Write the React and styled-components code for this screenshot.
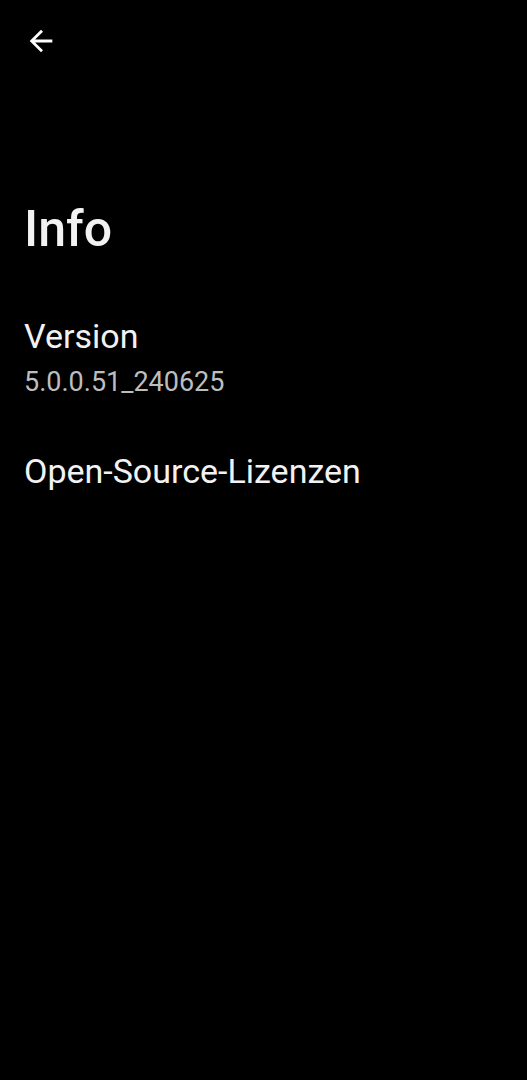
import React from "react";
import styled, { createGlobalStyle } from "styled-components";

const Global = createGlobalStyle`
  html, body { margin: 0; padding: 0; background: #000; }
  body { font-family: Roboto, "Noto Sans", sans-serif; color: #fff; }
`;

const Screen = styled.div`
  width: 527px;
  height: 1080px;
  background: #000;
  display: flex;
  flex-direction: column;
`;

const TopBar = styled.div`
  height: 80px;
  display: flex;
  align-items: center;
  padding-left: 16px;
`;

const BackButton = styled.button`
  width: 49px;
  height: 49px;
  background: none;
  border: none;
  padding: 0;
  display: flex;
  align-items: center;
  justify-content: center;
  color: #fff;
  margin-top: 1px;
`;

const Title = styled.h1`
  margin: 119px 0 0 0;
  padding: 0 24px;
  font-size: 50px;
  font-weight: 500;
  line-height: 60px;
  color: #f2f2f2;
`;

const Item = styled.div`
  padding: 0 24px;
  display: flex;
  flex-direction: column;
  margin-top: ${(p) => p.$top}px;
`;

const ItemTitle = styled.div`
  font-size: 34px;
  line-height: 44px;
  color: #f2f2f2;
`;

const ItemSub = styled.div`
  margin-top: 6px;
  font-size: 27px;
  line-height: 36px;
  color: #bdbdbd;
`;

export default function App() {
  return (
    <Screen>
      <Global />
      <TopBar>
        <BackButton aria-label="back">
          <svg width="34" height="34" viewBox="0 0 24 24" fill="#fff">
            <path d="M20 11H7.83l5.59-5.59L12 4l-8 8 8 8 1.41-1.41L7.83 13H20v-2z" />
          </svg>
        </BackButton>
      </TopBar>
      <Title>Info</Title>
      <Item $top={55}>
        <ItemTitle>Version</ItemTitle>
        <ItemSub>5.0.0.51_240625</ItemSub>
      </Item>
      <Item $top={49}>
        <ItemTitle>Open-Source-Lizenzen</ItemTitle>
      </Item>
    </Screen>
  );
}
